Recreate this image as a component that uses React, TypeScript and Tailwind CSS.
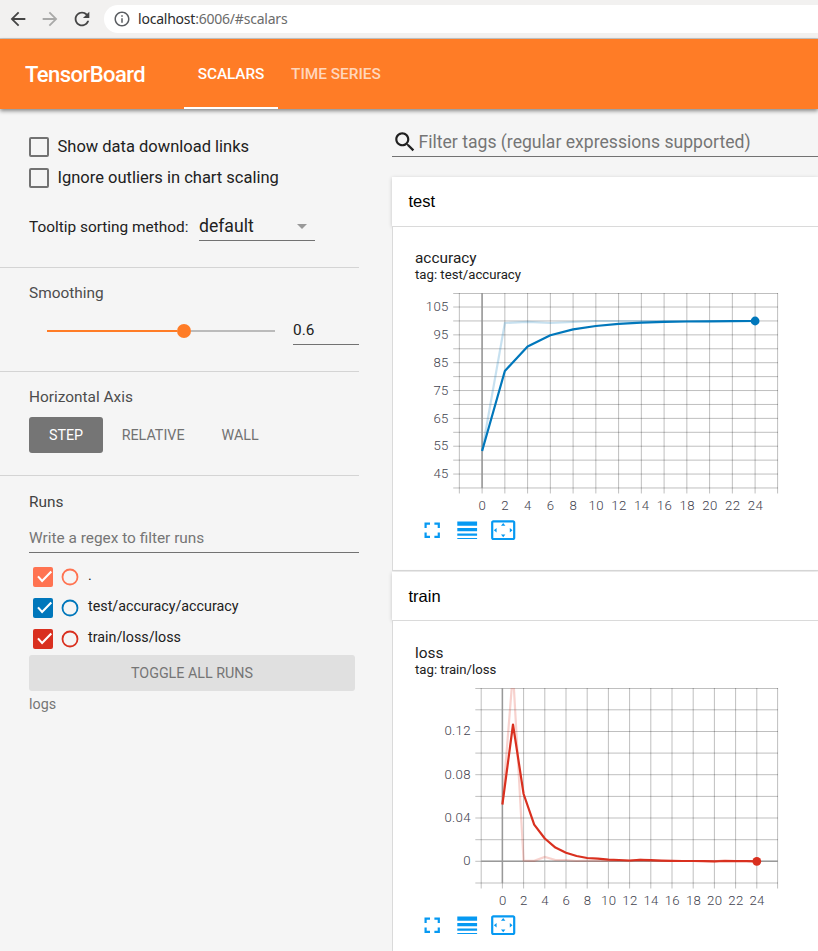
import React from "react";

const paths = {
  back: "M20 11H7.83l5.59-5.59L12 4l-8 8 8 8 1.41-1.41L7.83 13H20v-2z",
  forward: "M12 4l-1.41 1.41L16.17 11H4v2h12.17l-5.58 5.59L12 20l8-8z",
  refresh:
    "M17.65 6.35C16.2 4.9 14.21 4 12 4c-4.42 0-7.99 3.58-7.99 8s3.57 8 7.99 8c3.73 0 6.84-2.55 7.73-6h-2.08c-.82 2.33-3.04 4-5.65 4-3.31 0-6-2.69-6-6s2.69-6 6-6c1.66 0 3.14.69 4.22 1.78L13 11h7V4l-2.35 2.35z",
  info: "M11 17h2v-6h-2v6zm1-15C6.48 2 2 6.48 2 12s4.48 10 10 10 10-4.48 10-10S17.52 2 12 2zm0 18c-4.41 0-8-3.59-8-8s3.59-8 8-8 8 3.59 8 8-3.59 8-8 8zM11 9h2V7h-2v2z",
  search:
    "M15.5 14h-.79l-.28-.27C15.41 12.59 16 11.11 16 9.5 16 5.91 13.09 3 9.5 3S3 5.91 3 9.5 5.91 16 9.5 16c1.61 0 3.09-.59 4.23-1.57l.27.28v.79l5 4.99L20.49 19l-4.99-5zm-6 0C7.01 14 5 11.99 5 9.5S7.01 5 9.5 5 14 7.01 14 9.5 11.99 14 9.5 14z",
  fullscreen:
    "M7 14H5v5h5v-2H7v-3zm-2-4h2V7h3V5H5v5zm12 7h-3v2h5v-5h-2v3zM14 5v2h3v3h2V5h-5z",
  lines:
    "M3 17h18v-2H3v2zm0 3h18v-1H3v1zm0-7h18v-3H3v3zm0-9v4h18V4H3z",
  fit: "M12.01 5.5L10 8h4l-1.99-2.5zM18 10v4l2.5-1.99L18 10zM6 10l-2.5 2.01L6 14v-4zm8 6h-4l2.01 2.5L14 16zm7-13H3c-1.1 0-2 .9-2 2v14c0 1.1.9 2 2 2h18c1.1 0 2-.9 2-2V5c0-1.1-.9-2-2-2zm0 16.01H3V4.99h18v14.02z",
};

function Icon({ name, className }: { name: keyof typeof paths; className: string }) {
  return (
    <svg viewBox="0 0 24 24" fill="currentColor" className={`shrink-0 ${className}`}>
      <path d={paths[name]} />
    </svg>
  );
}

function BrowserBar() {
  return (
    <div className="flex h-[39px] shrink-0 items-center border-b border-[#c9c8c6] bg-[#f2f1f0] pl-[7px] text-[#454545]">
      <Icon name="back" className="size-[22px]" />
      <Icon name="forward" className="ml-[10px] size-[22px] text-[#a9a9a8]" />
      <Icon name="refresh" className="ml-[10px] size-[22px]" />
      <div className="ml-[11px] flex h-[28px] flex-1 items-center rounded-l-full bg-white pl-[9px]">
        <Icon name="info" className="size-[18px] text-[#5a5d61]" />
        <span className="mb-[2px] ml-[7px] font-['Noto_Sans',sans-serif] text-[14px] tracking-[-0.22px] text-[#6b6b6b]">
          <span className="text-[#2b2b2b]">localhost</span>:6006/#scalars
        </span>
      </div>
    </div>
  );
}

function Header() {
  return (
    <header className="relative z-10 flex h-[70px] shrink-0 bg-[#ff7c26] pl-[25px] text-white shadow-[0_2px_4px_rgba(0,0,0,0.45)]">
      <h1 className="w-[159px] text-[22px] leading-[71px] font-medium tracking-[-0.55px]">TensorBoard</h1>
      <div className="w-[94px] border-b-2 border-white text-center text-[15.4px] leading-[70px] font-medium tracking-[-0.1px]">
        SCALARS
      </div>
      <div className="ml-[13px] text-[15.4px] leading-[70px] font-medium text-white/70">TIME SERIES</div>
    </header>
  );
}

function Option({ label }: { label: string }) {
  return (
    <label className="flex h-[20px] items-center">
      <span className="size-[20px] rounded-[2px] border-2 border-[#727272]" />
      <span className="ml-[8.5px] text-[16.5px]">{label}</span>
    </label>
  );
}

const runs = [
  { name: ".", color: "#ff7351" },
  { name: "test/accuracy/accuracy", color: "#0077bb" },
  { name: "train/loss/loss", color: "#d9301f" },
];

function RunRow({ name, color }: { name: string; color: string }) {
  return (
    <div className="flex h-[31px] items-center pl-[4px]">
      <svg viewBox="0 0 20 20" className="mb-[2px] size-[20px]">
        <rect width="20" height="20" rx="2" fill={color} />
        <path d="M5 9.4l4.1 4.6 9.2-9.4" fill="none" stroke="white" strokeWidth="2.1" />
      </svg>
      <svg viewBox="0 0 18 18" className="mb-[1px] ml-[8px] size-[18px]">
        <circle cx="9" cy="9" r="7.5" fill="none" stroke={color} strokeWidth="1.8" />
      </svg>
      <span className="ml-[9px] -mt-[3px] text-[14.3px]">{name}</span>
    </div>
  );
}

function Sidebar() {
  return (
    <aside className="w-[392px] shrink-0 text-[#212121]">
      <section className="h-[159px] w-[359px] border-b border-[#d4d4d4] pt-[28px] pl-[29px]">
        <div className="flex flex-col gap-[11px]">
          <Option label="Show data download links" />
          <Option label="Ignore outliers in chart scaling" />
        </div>
        <div className="mt-[24px] flex h-[29px] items-center text-[15.4px]">
          <span className="mt-[2px] w-[170px]">Tooltip sorting method:</span>
          <div className="flex h-full w-[116px] items-center justify-between border-b border-[#727272] pr-[8px] text-[17.6px]">
            default
            <span className="border-x-[5.5px] border-t-[5.5px] border-x-transparent border-t-[#999]" />
          </div>
        </div>
      </section>
      <section className="h-[104px] w-[359px] border-b border-[#d4d4d4] pt-[15px] pl-[29px]">
        <h3 className="h-[20px] text-[15.4px] leading-[20px] text-[#4c4c4c]">Smoothing</h3>
        <div className="mt-[14px] flex h-[28px] items-center pl-[18px]">
          <div className="flex w-[228px] items-center">
            <div className="h-[2px] w-[130px] bg-[#ff7c26]" />
            <div className="size-[14px] rounded-full bg-[#ff7c26]" />
            <div className="h-[2px] flex-1 bg-[#bbb]" />
          </div>
          <div className="ml-[18px] h-[28px] w-[66px] border-b border-[#727272] text-[15.4px] leading-[26px]">0.6</div>
        </div>
      </section>
      <section className="h-[104px] w-[359px] border-b border-[#d4d4d4] pt-[15px] pl-[29px]">
        <h3 className="h-[20px] text-[15.4px] leading-[20px] text-[#4c4c4c]">Horizontal Axis</h3>
        <div className="mt-[10px] flex text-[14.3px] leading-[36px] text-[#727272]">
          <button className="w-[74px] rounded-[3px] bg-[#757575] text-white">STEP</button>
          <button className="ml-[18.6px] w-[63px]">RELATIVE</button>
          <button className="ml-[37px] w-[37px]">WALL</button>
        </div>
      </section>
      <section className="pt-[16px] pl-[29px]">
        <h3 className="h-[20px] text-[15.4px] leading-[20px] text-[#424242]">Runs</h3>
        <div className="mt-[12px] h-[29px] w-[330px] border-b border-[#727272] text-[15.4px] leading-[28px] text-[#757575]">
          Write a regex to filter runs
        </div>
        <div className="mt-[9px]">
          {runs.map((r) => (
            <RunRow key={r.name} {...r} />
          ))}
        </div>
        <button className="block h-[36px] w-[326px] rounded-[3px] bg-[#e0e0e0] pt-[1px] text-[14.3px] text-[#757575]">
          TOGGLE ALL RUNS
        </button>
        <div className="mt-[3px] text-[14.3px] leading-[20px] text-[#757575]">logs</div>
      </section>
    </aside>
  );
}

type Point = [number, number];
type ChartProps = {
  gridLeft: number;
  origin: number;
  step: number;
  rows: number[];
  labels: { text: string; y: number }[];
  zeroY?: number;
  color: string;
  faint: Point[];
  line: Point[];
};

// Chart coordinates start at the chart card's left edge and the top grid line.
function Chart({ gridLeft, origin, step, rows, labels, zeroY, color, faint, line }: ChartProps) {
  const bottom = rows[rows.length - 1];
  const columns = Array.from({ length: 15 }, (_, i) => Math.min(origin + (i - 1) * step, 384.6));
  const end = line[line.length - 1];
  const draw = (points: Point[]) => points.map((p) => p.join(",")).join(" ");
  return (
    <svg viewBox="0 0 425 222" className="block h-[222px] w-[425px] overflow-hidden">
      <g stroke="#000" strokeOpacity="0.25" strokeWidth="1">
        {rows.map((y) => (
          <line key={y} x1={gridLeft - 6} x2="385" y1={y} y2={y} />
        ))}
        {columns.map((x) => (
          <line key={x} x1={x} x2={x} y1="0" y2={bottom + 5.5} />
        ))}
      </g>
      <g stroke="#999" strokeWidth="1.5">
        <line x1={origin} x2={origin} y1="0" y2={bottom} />
        {zeroY !== undefined && <line x1={gridLeft} x2="385" y1={zeroY} y2={zeroY} />}
      </g>
      <polyline points={draw(faint)} fill="none" stroke={color} strokeOpacity="0.22" strokeWidth="2.2" />
      <polyline points={draw(line)} fill="none" stroke={color} strokeWidth="2.2" strokeLinejoin="round" />
      <circle cx={end[0]} cy={end[1]} r="4.4" fill={color} />
      <g fill="#42424e" fontSize="13.2" fontWeight="300" letterSpacing="0.3">
        {labels.map((l) => (
          <text key={l.text} x={gridLeft - 10.5} y={l.y + 4.2} textAnchor="end">
            {l.text}
          </text>
        ))}
        {columns.slice(1, 14).map((x, i) => (
          <text key={x} x={x + 0.3} y={bottom + 22.3} textAnchor="middle">
            {i * 2}
          </text>
        ))}
      </g>
    </svg>
  );
}

function Card({ group, title, tag, last, children }: {
  group: string;
  title: string;
  tag: string;
  last?: boolean;
  children: React.ReactNode;
}) {
  return (
    <section className={last ? "" : "mb-px"}>
      <h2
        className={`relative bg-white pl-[16.5px] font-['Liberation_Sans',Arial,sans-serif] text-[16.5px] leading-[49px] text-black shadow-[0_1px_4px_rgba(0,0,0,0.2)] ${last ? "h-[48px]" : "h-[49px]"}`}
      >
        {group}
      </h2>
      <div
        className={`relative border border-r-0 border-[#dadada] bg-white ${last ? "h-[346px] pt-[22px]" : "h-[345px] pt-[21px]"}`}
      >
        <div className="pl-[22px] text-[#212121]">
          <div className="h-[20px] text-[15.4px] leading-[21px]">{title}</div>
          <div className="h-[13px] text-[13.2px] leading-[13px]">{tag}</div>
        </div>
        <div className="mt-[12px]">{children}</div>
        <div className="mt-[1.6px] flex gap-[8.8px] pl-[26.2px] text-[#0699f2]">
          <Icon name="fullscreen" className="size-[26.4px]" />
          <Icon name="lines" className="size-[26.4px]" />
          <Icon name="fit" className="size-[26.4px]" />
        </div>
      </div>
    </section>
  );
}

const accuracyX = (v: number) => 89.1 + v * 11.375;
const lossX = (v: number) => 109.4 + v * 10.6;

const accuracy: Point[] = [158, 78, 53.4, 42.3, 36.4, 33, 30.8, 29.6, 28.8, 28.5, 28.3, 28.2, 28].map(
  (y, i) => [accuracyX(i * 2), y],
);
const accuracyRaw: Point[] = [158, 30, 28.8, 30, 29, 28, 28, 28, 28, 28, 28, 28, 28].map((y, i) => [
  accuracyX(i * 2),
  y,
]);
const loss: Point[] = [
  116.5, 36.5, 106, 136.6, 150.5, 159.6, 164.8, 168, 170, 170.6, 171.6, 172, 172.5, 171.9, 172.2, 172.6, 172.8, 173,
  173, 173.2, 173.4, 173, 173.1, 173.2, 173.3,
].map((y, i) => [lossX(i), y]);
const lossRaw: Point[] = [
  116.5, -16, 172.5, 172.8, 169, 172, 172, 173, 172.5, 173, 173, 173, 173, 171.5, 173, 173, 173, 173, 173, 173, 173.5,
  172, 173, 173, 173.3,
].map((y, i) => [lossX(i), y]);

export default function App() {
  return (
    <div className="flex h-[951px] w-full flex-col overflow-hidden bg-[#f5f5f5] font-[Roboto,sans-serif]">
      <BrowserBar />
      <Header />
      <div className="flex min-h-0 flex-1 overflow-hidden">
        <Sidebar />
        <main className="min-w-0 flex-1">
          <div className="mt-[18px] mb-[20px] flex h-[30px] items-center border-b border-[#727272] text-[#212121]">
            <Icon name="search" className="size-[26px]" />
            <span className="mt-[2px] ml-[0.5px] text-[17.6px] text-[#757575]">Filter tags (regular expressions supported)</span>
          </div>
          <Card group="test" title="accuracy" tag="tag: test/accuracy">
            <Chart
              gridLeft={66.2}
              origin={89.1}
              step={22.75}
              rows={Array.from({ length: 15 }, (_, i) => (i === 0 ? 0.5 : 0.1 + i * 13.92))}
              labels={[105, 95, 85, 75, 65, 55, 45].map((v, i) => ({ text: String(v), y: 14 + i * 27.84 }))}
              color="#0077bb"
              faint={accuracyRaw}
              line={accuracy}
            />
          </Card>
          <Card group="train" title="loss" tag="tag: train/loss" last>
            <Chart
              gridLeft={88.3}
              origin={109.4}
              step={21.2}
              rows={[0.5, 21.8, 43.5, 65.1, 86.7, 108.4, 130, 151.7, 173.3, 195]}
              labels={["0.12", "0.08", "0.04", "0"].map((text, i) => ({ text, y: 43.2 + i * 43.3 }))}
              zeroY={173.3}
              color="#d9301f"
              faint={lossRaw}
              line={loss}
            />
          </Card>
        </main>
      </div>
    </div>
  );
}
